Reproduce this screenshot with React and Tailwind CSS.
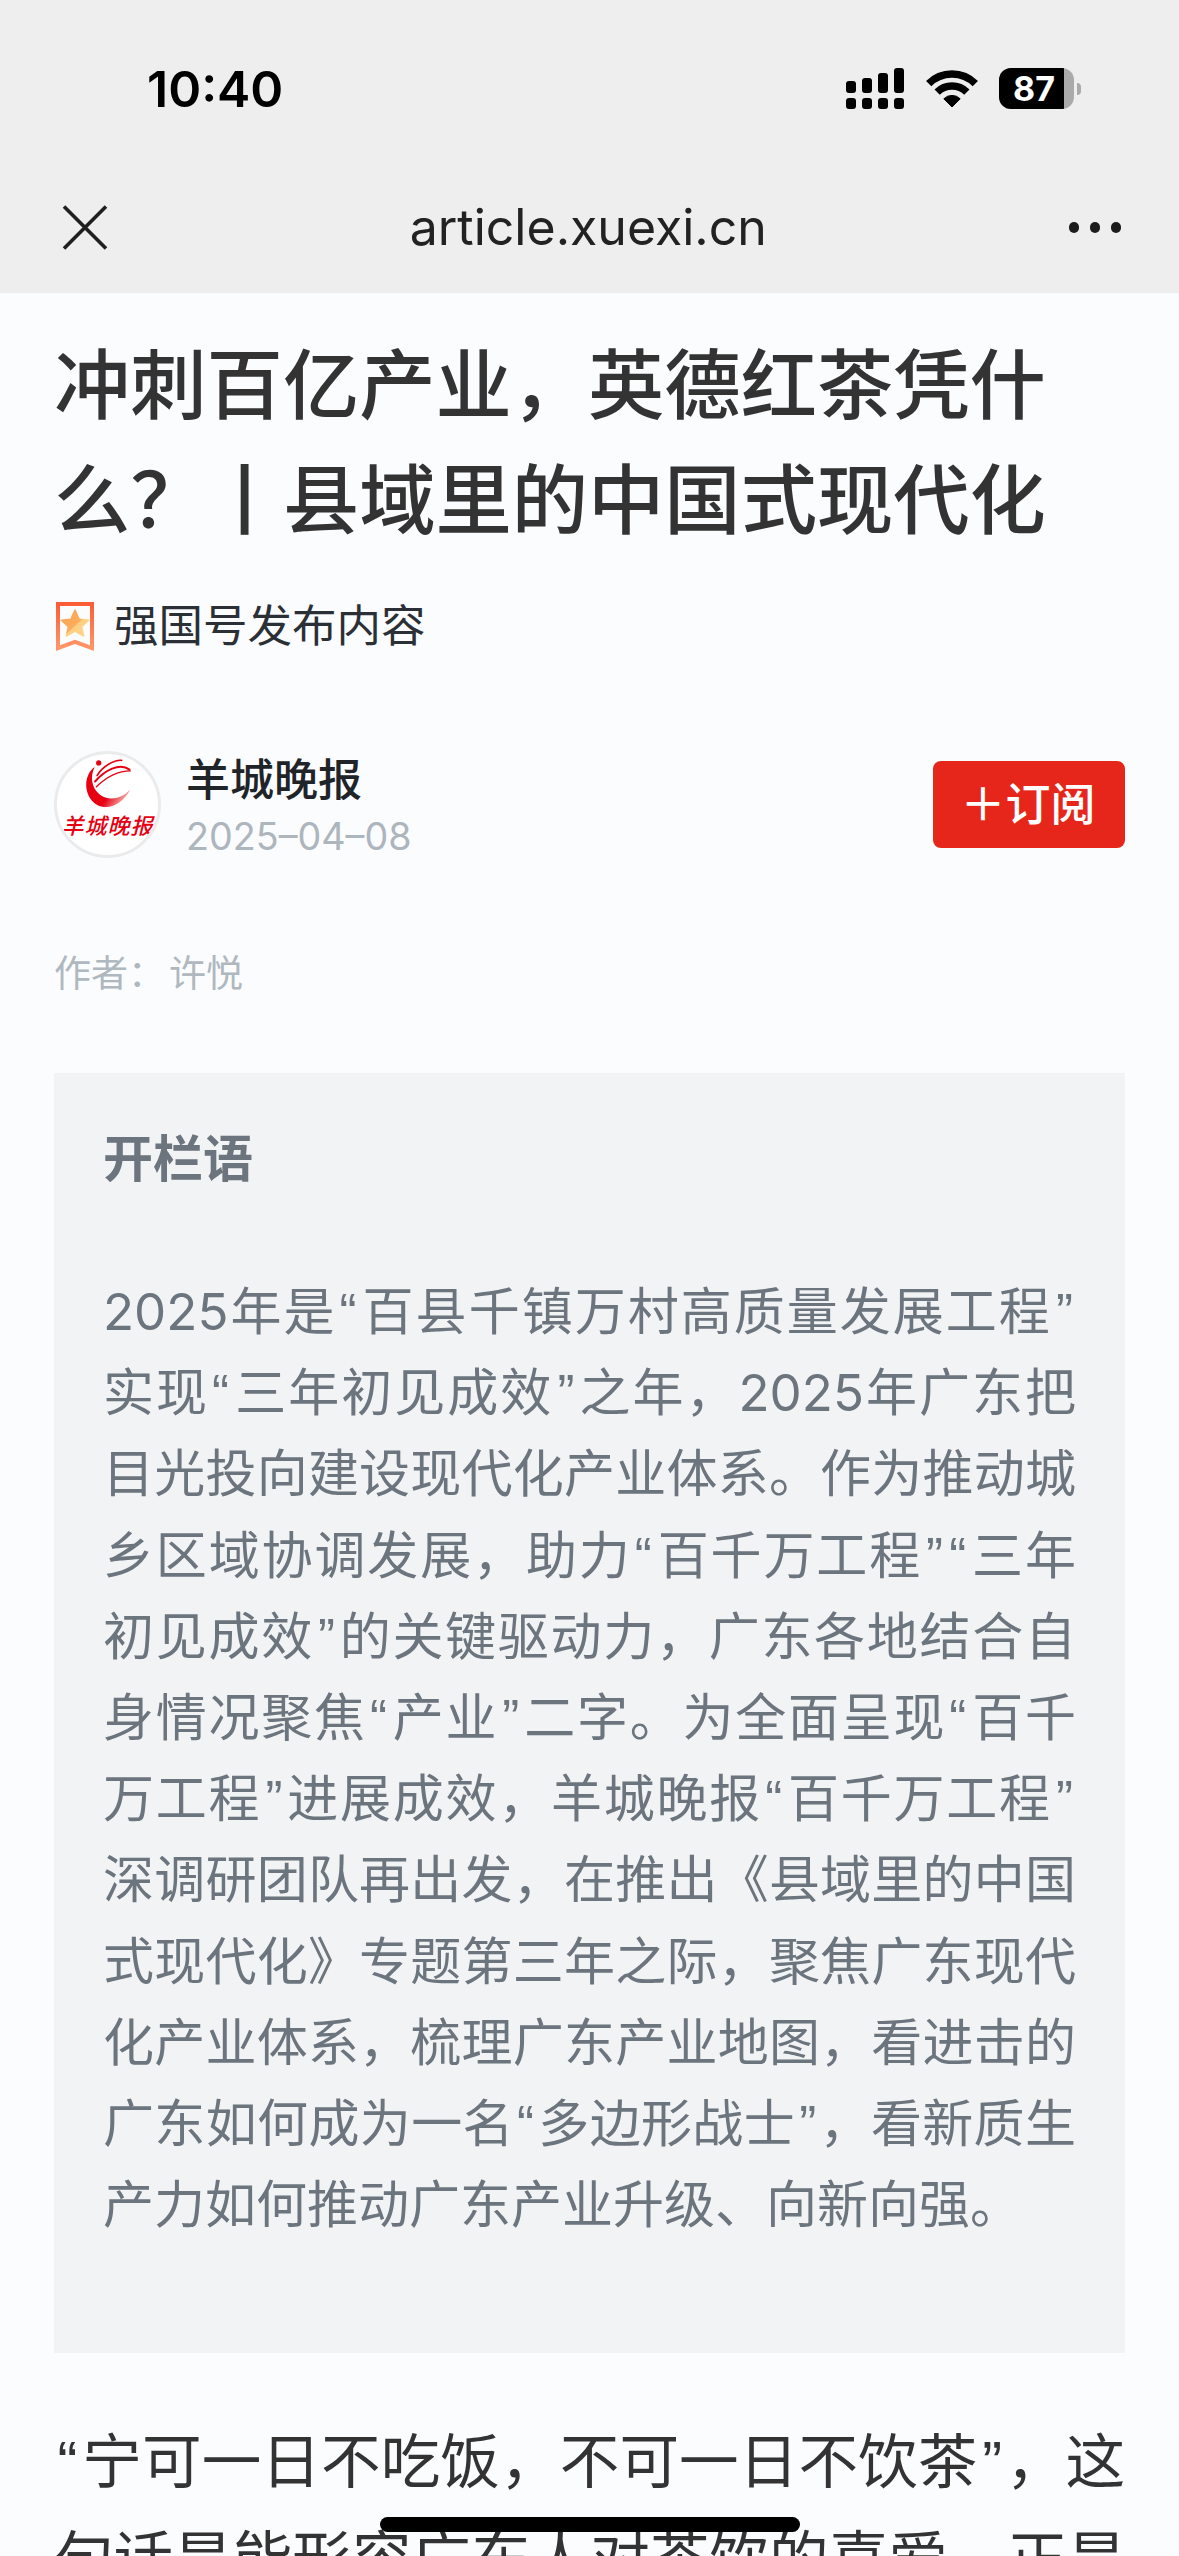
const intro = [
  "2025年是“百县千镇万村高质量发展工程”",
  "实现“三年初见成效”之年，2025年广东把",
  "目光投向建设现代化产业体系。作为推动城",
  "乡区域协调发展，助力“百千万工程”“三年",
  "初见成效”的关键驱动力，广东各地结合自",
  "身情况聚焦“产业”二字。为全面呈现“百千",
  "万工程”进展成效，羊城晚报“百千万工程”",
  "深调研团队再出发，在推出《县域里的中国",
  "式现代化》专题第三年之际，聚焦广东现代",
  "化产业体系，梳理广东产业地图，看进击的",
  "广东如何成为一名“多边形战士”，看新质生",
];

function Q({ children }) {
  return children.split(/([“”])/).map((p, i) =>
    p === "“" ? (
      <span key={i} className="font-['Liberation_Sans',sans-serif] leading-[0] ml-[0.06em] mr-[0.08em]">{p}</span>
    ) : p === "”" ? (
      <span key={i} className="font-['Liberation_Sans',sans-serif] leading-[0] ml-[0.08em] mr-[0.06em]">{p}</span>
    ) : (
      p
    )
  );
}

function Signal() {
  return (
    <svg width="58" height="41" viewBox="0 0 58 41" fill="#000">
      <rect x="0" y="30" width="10" height="11" rx="3" />
      <rect x="16" y="30" width="10" height="11" rx="3" />
      <rect x="32" y="30" width="10" height="11" rx="3" />
      <rect x="48" y="30" width="10" height="11" rx="3" />
      <rect x="0" y="13" width="10" height="12" rx="3" />
      <rect x="16" y="10" width="10" height="15" rx="3" />
      <rect x="32" y="5" width="10" height="20" rx="3" />
      <rect x="48" y="0" width="10" height="25" rx="3" />
    </svg>
  );
}

function Wifi() {
  return (
    <svg width="52" height="39" viewBox="-26 -38 52 39">
      <path d="M-23.3 -23.3A33 33 0 0 1 23.3 -23.3" fill="none" stroke="#000" strokeWidth="7.5" />
      <path d="M-14.85 -14.85A21 21 0 0 1 14.85 -14.85" fill="none" stroke="#000" strokeWidth="7.5" />
      <path d="M0 0L-8.2 -8.2A11.6 11.6 0 0 1 8.2 -8.2Z" fill="#000" stroke="#000" strokeWidth="1" strokeLinejoin="round" />
    </svg>
  );
}

function Badge() {
  return (
    <svg width="38" height="49" viewBox="0 0 38 49" className="ml-[2px]">
      <defs>
        <linearGradient id="bm" x1="0" y1="0" x2="0" y2="1">
          <stop offset="0" stopColor="#fb5b34" />
          <stop offset="1" stopColor="#ff9a6b" />
        </linearGradient>
        <linearGradient id="st" x1="0" y1="0" x2="1" y2="1">
          <stop offset="0" stopColor="#fba556" />
          <stop offset="0.55" stopColor="#fdab5c" />
          <stop offset="0.56" stopColor="#ffcf80" />
          <stop offset="1" stopColor="#ffd68c" />
        </linearGradient>
      </defs>
      <path d="M0 0H38V49L19 42L0 49Z M4 4V43.3L19 37.8L34 43.3V4Z" fill="url(#bm)" fillRule="evenodd" />
      <path d="M19 8L23.2 17.2L32.6 18.2L25.6 24.6L27.6 34L19 29.2L10.4 34L12.4 24.6L5.4 18.2L14.8 17.2Z" fill="url(#st)" strokeLinejoin="round" stroke="url(#st)" strokeWidth="1.5" />
    </svg>
  );
}

function Logo() {
  return (
    <div className="w-[107px] h-[107px] rounded-full bg-white border-[3px] border-[#e9ebec] flex flex-col items-center overflow-hidden shrink-0">
      <svg width="50" height="53" viewBox="130 55 150 160" className="mt-[4px] shrink-0">
        <defs>
          <linearGradient id="moon" x1="0.2" y1="0.3" x2="1" y2="0.8">
            <stop offset="0" stopColor="#e60012" />
            <stop offset="0.5" stopColor="#e60012" />
            <stop offset="1" stopColor="#fbd5ca" />
          </linearGradient>
        </defs>
        <circle cx="177" cy="70" r="8" fill="#e60012" />
        <path d="M165 82C130 105 130 170 170 195C205 215 250 195 272 150C245 180 205 185 180 165C155 145 150 110 165 82Z" fill="url(#moon)" />
        <g fill="none" stroke="#e60012" strokeLinecap="round">
          <path d="M172 108C190 78 225 60 246 62" strokeWidth="5" />
          <path d="M166 126C195 92 240 68 270 90" strokeWidth="6" />
          <path d="M170 142C205 108 240 94 272 94" strokeWidth="4" />
        </g>
      </svg>
      <span className="text-[#e60012] text-[22px] leading-[26px] font-medium italic whitespace-nowrap tracking-[1px] mt-[2px]">羊城晚报</span>
    </div>
  );
}

export default function App() {
  return (
    <div className="relative h-[2556px] overflow-hidden bg-[#fbfcfe] font-['Inter','Noto_Sans_CJK_SC',sans-serif]">
      <header className="bg-[#eeeeee] h-[293px]">
        <div className="h-[176px] flex items-center pl-[147px] pr-[98px] justify-between pt-[1px]">
          <span className="text-[50px] font-semibold text-black leading-none">10:40</span>
          <div className="flex items-center">
            <Signal />
            <div className="ml-[22px]"><Wifi /></div>
            <div className="ml-[21px] flex items-center">
              <div className="w-[75px] h-[41px] rounded-[12px] overflow-hidden bg-[#aaaaaa] flex">
                <div className="w-[65px] bg-black flex items-center justify-center pl-[5px]">
                  <span className="text-white text-[34px] font-bold leading-none">87</span>
                </div>
              </div>
              <div className="w-[4px] h-[12px] ml-[3px] bg-[#aaaaaa] rounded-r-full" />
            </div>
          </div>
        </div>
        <div className="h-[117px] flex items-center justify-between pl-[62px] pr-[58px] -mt-[7px]">
          <svg width="46" height="45" viewBox="0 0 46 45" fill="none" stroke="#1f1f1f" strokeWidth="3.6">
            <path d="M2 1.5L44 43.5M44 1.5L2 43.5" />
          </svg>
          <span className="text-[50px] leading-none text-[#222222] -mt-[2px]">article.xuexi.cn</span>
          <div className="flex gap-[10.5px]">
            <div className="w-[10.5px] h-[10.5px] rounded-full bg-[#1c1c1c]" />
            <div className="w-[10.5px] h-[10.5px] rounded-full bg-[#1c1c1c]" />
            <div className="w-[10.5px] h-[10.5px] rounded-full bg-[#1c1c1c]" />
          </div>
        </div>
      </header>

      <main className="px-[54px]">
        <h1 className="text-[76.3px] leading-[115px] font-medium text-[#333333] mt-[35px] whitespace-nowrap">
          <span className="block">冲刺百亿产业，英德红茶凭什</span>
          <span className="block">么？丨县域里的中国式现代化</span>
        </h1>

        <div className="flex items-center mt-[36px]">
          <Badge />
          <span className="ml-[20px] text-[44.5px] leading-[64px] text-[#2b3036]">强国号发布内容</span>
        </div>

        <div className="flex items-center justify-between mt-[93px]">
          <div className="flex items-center">
            <Logo />
            <div className="ml-[25px] flex flex-col">
              <span className="text-[44px] leading-[56px] font-medium text-[#1f2429]">羊城晚报</span>
              <span className="text-[37.7px] leading-[50px] mt-[3px] -mb-[3px] text-[#adb5bd]">2025–04–08</span>
            </div>
          </div>
          <button className="w-[192px] h-[87px] rounded-[8px] bg-[#e6261a] text-white text-[45px] font-medium flex items-center justify-center pr-[2px]">
            ＋订阅
          </button>
        </div>

        <div className="mt-[90px] text-[37px] leading-[52px] text-[#b0b8bf] flex">
          <span>作者：</span>
          <span className="ml-[4px]">许悦</span>
        </div>

        <section className="mt-[73px] h-[1280px] bg-[#f2f3f5] px-[49px] pt-[46px]">
          <h2 className="text-[50px] leading-[80px] font-semibold text-[#6c757d]">开栏语</h2>
          <div className="mt-[72px] text-[51px] leading-[81.2px] text-[#6c757d]">
            {intro.map((l) => (
              <div key={l} className="[text-align-last:justify] whitespace-nowrap"><Q>{l}</Q></div>
            ))}
            <div>产力如何推动广东产业升级、向新向强。</div>
          </div>
        </section>

        <div className="mt-[60px] text-[59.6px] leading-[97px] text-[#333333]">
          <div className="[text-align-last:justify] whitespace-nowrap"><Q>“宁可一日不吃饭，不可一日不饮茶”，这</Q></div>
          <div className="[text-align-last:justify] whitespace-nowrap">句话是能形容广东人对茶饮的喜爱，正是</div>
        </div>
      </main>

      <div className="absolute left-[380px] top-[2517px] w-[420px] h-[15px] rounded-full bg-black" />
    </div>
  );
}
